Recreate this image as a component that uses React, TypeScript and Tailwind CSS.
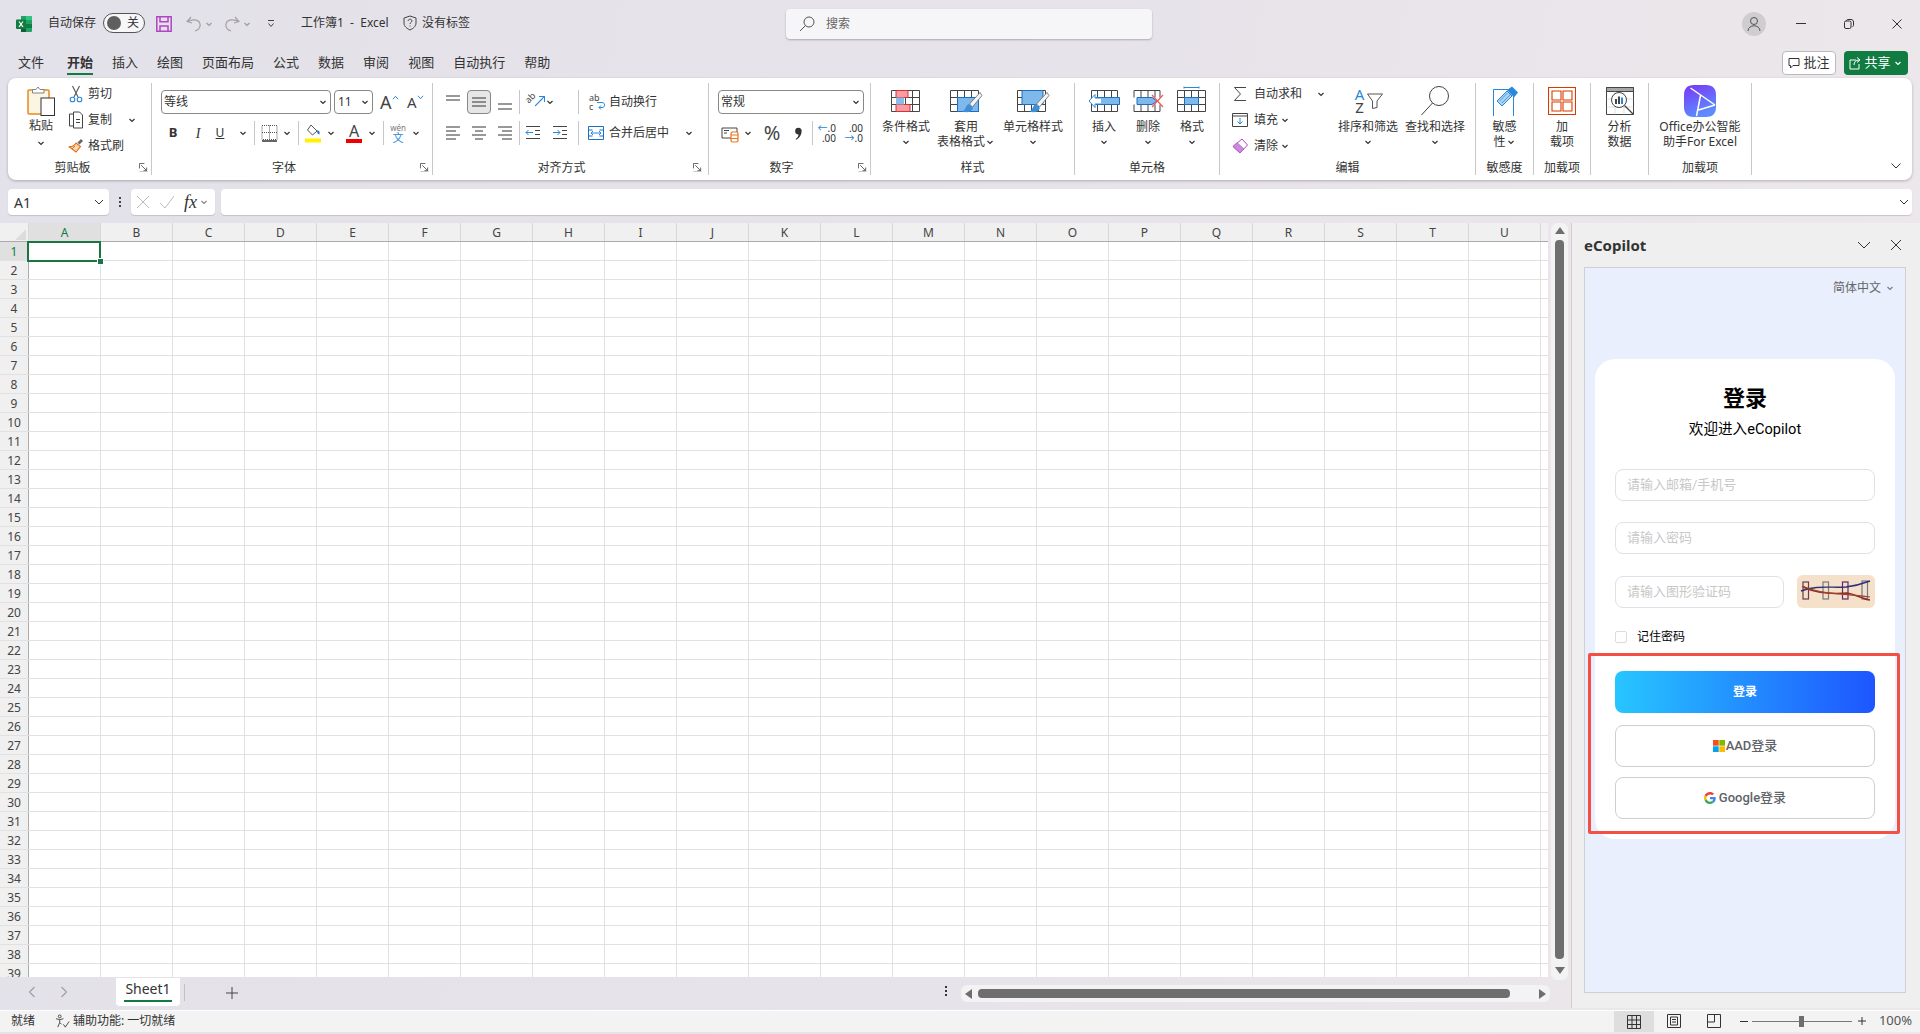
import React from 'react';

const green = '#107c41';
const columns = 'ABCDEFGHIJKLMNOPQRSTU'.split('');
const rows = Array.from({ length: 39 }, (_, i) => i + 1);

function Chev({ className = '' }: { className?: string }) {
  return (
    <svg viewBox="0 0 10 10" className={`w-[10px] h-[10px] shrink-0 ${className}`} fill="none" stroke="#333" strokeWidth="1.2">
      <path d="M2.500 4l2.500 2.500L7.500 4" />
    </svg>
  );
}

function Sep({ className = '' }: { className?: string }) {
  return <div className={`w-px h-[24px] bg-[#c8c6c8] shrink-0 ${className}`} />;
}

function Launcher() {
  return (
    <svg viewBox="0 0 10 10" className="w-[9px] h-[9px]" fill="none" stroke="#555" strokeWidth="1">
      <path d="M.5 6V.5H6M2.500 2.500L8.500 8.500M5 8.500h3.500V5" />
      <path d="M.5 9.500h9" stroke="#bbb" />
    </svg>
  );
}

function Group({ className, label, launcher, children }: { className: string; label?: string; launcher?: string; children: React.ReactNode }) {
  return (
    <div className={`shrink-0 h-full border-r border-[#c9c7ca] flex flex-col ${className}`}>
      <div className="h-[78px] flex">{children}</div>
      <div className="h-[13px] flex items-center text-[12px] leading-[13px] text-[#333]">
        <div className="flex-1 text-center whitespace-nowrap">{label}</div>
        {launcher && <div className={`flex justify-center ${launcher}`}><Launcher /></div>}
      </div>
    </div>
  );
}

function BigBtn({ className, icon, line1, line2, chev }: { className: string; icon: React.ReactNode; line1: string; line2?: string; chev?: boolean }) {
  return (
    <div className={`shrink-0 flex flex-col items-center ${className}`}>
      <div className="mt-[2px] h-[32px] flex items-center justify-center">{icon}</div>
      <div className="mt-[2px] h-[15px] leading-[15px] text-[12px] whitespace-nowrap text-[#333]">{line1}</div>
      <div className="h-[15px] leading-[15px] text-[12px] whitespace-nowrap text-[#333] flex items-center justify-center">
        {line2}
        {chev && <Chev />}
      </div>
    </div>
  );
}

function LinesIcon({ lines, className = '' }: { lines: [number, number, number][]; className?: string }) {
  return (
    <svg viewBox="0 0 20 20" className={`w-[20px] h-[20px] shrink-0 ${className}`} stroke="#333" strokeWidth="1">
      {lines.map(([y, a, b], i) => (
        <path key={i} d={`M${a} ${y}H${b}`} />
      ))}
    </svg>
  );
}

// 28x22 table drawn at 1,4 in a 32x30 box, 4 cols 3 rows
const tableLines = <path d="M1.500 4.500h28v21h-28zM1.500 11.500h28M1.500 18.500h28M8.500 4.500v21M15.500 4.500v21M22.500 4.500v21" stroke="#444" fill="#fff" />;

function Brush() {
  return (
    <g>
      <path d="M31 6.500L20.500 18l3 3L33 9.500z" fill="#f4f4f4" stroke="#666" strokeWidth=".8" />
      <path d="M20 18c-3.500 1-2.500 5-6.500 7.500 4.500 1.500 9.500.5 10.500-3.500z" fill="#3f8fd8" />
    </g>
  );
}

function TitleBar() {
  return (
    <div className="h-[46px] shrink-0 flex items-start text-[12px] text-[#333]">
      <svg viewBox="0 0 16 16" className="w-[16px] h-[16px] ml-[16px] mt-[16px] shrink-0">
        <path d="M5 0h10a1 1 0 011 1v14a1 1 0 01-1 1H5z" fill="#21a366" />
        <path d="M10 0h5a1 1 0 011 1v3h-6z" fill="#33c481" />
        <path d="M5 8h5v8H5z" fill="#185c37" />
        <path d="M10 8h6v4h-6z" fill="#107c41" />
        <rect x="0" y="3.500" width="10" height="9.500" rx="1" fill="#107c41" />
        <path d="M2.500 5.500l1.700 2.800-1.800 2.800h1.400L5 9.200l1.200 1.900h1.400L5.800 8.300l1.700-2.800H6.200L5 7.400 3.800 5.500z" fill="#fff" />
      </svg>
      <div className="ml-[16px] mt-[15px] leading-[16px] w-[55px]">自动保存</div>
      <div className="mt-[13px] w-[42px] h-[20px] rounded-full border border-[#555] bg-[#f7f6f8] flex items-center pl-[3px] gap-[6px]">
        <div className="w-[14px] h-[14px] rounded-full bg-[#5f5f5f]" />
        <span className="leading-none">关</span>
      </div>
      <svg viewBox="0 0 16 16" className="w-[16px] h-[16px] ml-[11px] mt-[16px] shrink-0" fill="none" stroke="#b146c2" strokeWidth="1.500">
        <path d="M.8.800h14.400v14.400H.8zM4 .8v5h8v-5M4 15.200V10h8v5.200" />
      </svg>
      <svg viewBox="0 0 16 16" className="w-[16px] h-[16px] ml-[14px] mt-[16px] shrink-0" fill="none" stroke="#a3a1a6" strokeWidth="1.200">
        <path d="M5 1L1 5.500l5 1.500M1.500 5.500C6 3 13 3 14 8c.6 3.500-2 6-5 7" />
      </svg>
      <Chev className="ml-[2px] mt-[19px] opacity-40" />
      <svg viewBox="0 0 16 16" className="w-[16px] h-[16px] ml-[10px] mt-[16px] shrink-0" fill="none" stroke="#a3a1a6" strokeWidth="1.200">
        <path d="M11 1l4 4.500-5 1.500M14.500 5.500C10 3 3 3 2 8c-.6 3.500 2 6 5 7" />
      </svg>
      <Chev className="ml-[2px] mt-[19px] opacity-40" />
      <svg viewBox="0 0 10 10" className="w-[10px] h-[10px] ml-[14px] mt-[19px] shrink-0" fill="none" stroke="#444" strokeWidth="1">
        <path d="M2 1.500h6M2.500 4.500L5 7.500l2.500-3" />
      </svg>
      <div className="ml-[25px] mt-[15px] leading-[16px] whitespace-nowrap w-[95px]">工作簿1&nbsp;&nbsp;-&nbsp;&nbsp;Excel</div>
      <svg viewBox="0 0 14 16" className="w-[14px] h-[16px] ml-[7px] mt-[15px] shrink-0" fill="none" stroke="#444" strokeWidth="1">
        <path d="M7 1l6 2v5c0 3.500-3 5.500-6 7-3-1.500-6-3.500-6-7V3z" />
        <path d="M5.200 6c0-2.400 3.700-2.400 3.700 0 0 1.400-1.900 1.400-1.900 3M7 10.500v1" />
      </svg>
      <div className="ml-[5px] mt-[15px] leading-[16px] whitespace-nowrap">没有标签</div>

      <div className="ml-[316px] mt-[9px] w-[366px] h-[30px] bg-[#f6f5f7] rounded-[4px] shadow-[0_1px_2px_rgba(0,0,0,0.25)] flex items-center pl-[13px] text-[#666]">
        <svg viewBox="0 0 16 16" className="w-[16px] h-[16px]" fill="none" stroke="#555" strokeWidth="1">
          <circle cx="10" cy="6" r="5" />
          <path d="M6.500 9.500L1 15" />
        </svg>
        <span className="ml-[11px]">搜索</span>
      </div>

      <div className="ml-[590px] mt-[12px] w-[24px] h-[24px] rounded-full bg-[#cfcdcf] flex items-center justify-center">
        <svg viewBox="0 0 16 16" className="w-[16px] h-[16px]" fill="none" stroke="#555" strokeWidth="1">
          <circle cx="8" cy="5" r="3.500" />
          <path d="M2 15c0-7 12-7 12 0" />
        </svg>
      </div>
      <div className="ml-[30px] mt-[23px] w-[10px] h-px bg-[#333]" />
      <svg viewBox="0 0 10 10" className="w-[10px] h-[10px] ml-[38px] mt-[19px]" fill="none" stroke="#333" strokeWidth="1">
        <rect x=".5" y="2" width="6.500" height="7.500" rx="1.500" />
        <path d="M2.500 2c0-1 .5-1.500 1.500-1.500h3c1.500 0 2.500 1 2.500 2.500v3.500c0 .7-.3 1-1 1" />
      </svg>
      <svg viewBox="0 0 10 10" className="w-[10px] h-[10px] ml-[38px] mt-[19px]" fill="none" stroke="#333" strokeWidth="1">
        <path d="M.5.500l9 9M9.500.5l-9 9" />
      </svg>
    </div>
  );
}

function TabsRow() {
  const tabs = ['插入', '绘图', '页面布局', '公式', '数据', '审阅', '视图', '自动执行', '帮助'];
  return (
    <div className="h-[32px] shrink-0 flex text-[13px] text-[#333]">
      <div className="ml-[18px] mt-[7px] leading-[18px]">文件</div>
      <div className="ml-[23px] mt-[7px] h-[25px] flex flex-col items-start font-bold">
        <span className="leading-[18px]">开始</span>
        <div className="w-[26px] h-[2px] mt-[2px]" style={{ backgroundColor: green }} />
      </div>
      {tabs.map((t) => (
        <div key={t} className="ml-[19px] mt-[7px] leading-[18px] whitespace-nowrap">
          {t}
        </div>
      ))}
      <div className="ml-auto mt-[5px] w-[54px] h-[24px] bg-white border border-[#bbb] rounded-[4px] flex items-center justify-center gap-[3px]">
        <svg viewBox="0 0 12 12" className="w-[12px] h-[12px]" fill="none" stroke="#333" strokeWidth="1">
          <path d="M1 1.500h10v7H5L2.500 11V8.500H1z" />
        </svg>
        <span>批注</span>
      </div>
      <div className="ml-[8px] mr-[12px] mt-[5px] w-[64px] h-[24px] bg-[#107c41] rounded-[4px] flex items-center justify-center text-white">
        <svg viewBox="0 0 12 14" className="w-[12px] h-[14px] mr-[3px]" fill="none" stroke="#fff" strokeWidth="1">
          <path d="M7 4H1v9h9V8M5 9c0-3 2-5 5-5M8 1.500L11 4 8 6.500" />
        </svg>
        <span>共享</span>
        <svg viewBox="0 0 10 10" className="w-[10px] h-[10px] ml-[2px]" fill="none" stroke="#fff" strokeWidth="1.100">
          <path d="M2.500 4L5 6.500 7.500 4" />
        </svg>
      </div>
    </div>
  );
}

function Ribbon() {
  return (
    <div className="h-[102px] shrink-0 mx-[8px] bg-white rounded-[8px] shadow-[0_1px_3px_rgba(0,0,0,0.25)] py-[5px] flex items-stretch text-[12px] text-[#333] relative">
      {/* 剪贴板 */}
      <Group className="w-[144px]" label="剪贴板" launcher="w-[14px] pr-[2px]">
        <div className="ml-[6px] w-[54px] flex flex-col items-center">
          <svg viewBox="0 0 28 30" className="w-[28px] h-[30px] mt-[3px]" fill="none">
            <rect x="1" y="4" width="21" height="24" rx="1" fill="#fdf5e4" stroke="#e8891d" strokeWidth="1.500" />
            <path d="M5.500 7V3.500h3.500L11 1l2 2.500h4V7z" fill="#fff" stroke="#777" strokeWidth=".9" />
            <rect x="14" y="12" width="13.500" height="17.500" fill="#fff" stroke="#333" />
          </svg>
          <div className="mt-[2px] h-[16px] leading-[16px]">粘贴</div>
          <Chev className="mt-[4px]" />
        </div>
        <div className="flex flex-col gap-[4px]">
          <div className="h-[22px] flex items-center">
            <svg viewBox="0 0 16 18" className="w-[16px] h-[18px]" fill="none" strokeWidth="1.100">
              <path d="M4.500 1l5.500 11M11.500 1L6 12" stroke="#555" />
              <circle cx="4.500" cy="14.500" r="2.300" stroke="#2b88d8" />
              <circle cx="11.500" cy="14.500" r="2.300" stroke="#2b88d8" />
            </svg>
            <span className="ml-[4px]">剪切</span>
          </div>
          <div className="h-[22px] flex items-center">
            <svg viewBox="0 0 16 18" className="w-[16px] h-[18px]" fill="none" stroke="#444" strokeWidth="1">
              <path d="M5.500 3H1.500v12h4" />
              <path d="M5.500 1h6l3 3v13h-9zM8 8.500h4M8 11.500h4" />
            </svg>
            <span className="ml-[4px]">复制</span>
            <Chev className="ml-[15px]" />
          </div>
          <div className="h-[22px] flex items-center">
            <svg viewBox="0 0 16 18" className="w-[16px] h-[18px]" fill="none">
              <path d="M9.500 5.500L13 2l2 2-3.500 3.500z" fill="#666" />
              <path d="M8 6l4.500 3.500L8 15 .8 9.500C3 10 6 9 8 6z" fill="#fbd7ac" stroke="#e2711d" strokeWidth="1.100" />
              <path d="M4 12l3-3" stroke="#e2711d" />
            </svg>
            <span className="ml-[4px]">格式刷</span>
          </div>
        </div>
      </Group>

      {/* 字体 */}
      <Group className="w-[281px]" label="字体" launcher="w-[16px]">
        <div className="pl-[9px] flex flex-col">
          <div className="mt-[7px] h-[24px] flex items-center">
            <div className="w-[170px] h-[24px] border border-[#8a8886] rounded-[4px] flex items-center justify-between pl-[2px] pr-[2px]">
              等线
              <Chev />
            </div>
            <div className="ml-[3px] w-[39px] h-[24px] border border-[#8a8886] rounded-[4px] flex items-center justify-between pl-[3px] pr-[2px]">
              11
              <Chev />
            </div>
            <div className="ml-[7px] w-[20px] flex items-start text-[18px] leading-[20px] text-[#444]">
              A
              <svg viewBox="0 0 8 6" className="w-[7px] h-[5px] mt-[3px]" fill="none" stroke="#2b88d8" strokeWidth="1.200">
                <path d="M1 5l3-3.500L7 5" />
              </svg>
            </div>
            <div className="ml-[7px] w-[20px] flex items-start text-[15px] leading-[20px] text-[#444]">
              A
              <svg viewBox="0 0 8 6" className="w-[7px] h-[5px] mt-[3px]" fill="none" stroke="#2b88d8" strokeWidth="1.200">
                <path d="M1 1l3 3.500L7 1" />
              </svg>
            </div>
          </div>
          <div className="mt-[7px] h-[24px] flex items-center">
            <span className="ml-[2px] w-[20px] text-center font-bold text-[13px]">B</span>
            <span className="ml-[5px] w-[20px] text-center italic font-['Liberation_Serif',serif] text-[14px]">I</span>
            <span className="ml-[2px] w-[20px] text-center underline">U</span>
            <Chev className="ml-[8px]" />
            <Sep className="ml-[6px]" />
            <svg viewBox="0 0 20 20" className="ml-[4px] w-[20px] h-[20px]" fill="none" stroke="#555" strokeWidth="1" strokeDasharray="1 1">
              <path d="M3 2.500h15v14H3zM3 9.500h15M10.500 2.500v14" />
              <path d="M3 18h15" stroke="#111" strokeWidth="1.300" strokeDasharray="none" />
            </svg>
            <Chev className="ml-[3px]" />
            <Sep className="ml-[6px]" />
            <svg viewBox="0 0 20 20" className="ml-[4px] w-[20px] h-[20px]" fill="none">
              <path d="M8 2l6 6-4.500 4L4.500 7z" fill="#fff" stroke="#555" />
              <path d="M14 7l2.500 1.500v3l-2-1z" fill="#1b6ec2" />
              <rect x="2" y="15.500" width="16" height="4" fill="#fff200" />
            </svg>
            <Chev className="ml-[3px]" />
            <div className="ml-[8px] w-[20px] flex flex-col items-center">
              <span className="text-[16px] leading-[15px] text-[#444]">A</span>
              <div className="w-[16px] h-[4px] bg-[#f00000]" />
            </div>
            <Chev className="ml-[3px]" />
            <Sep className="ml-[6px]" />
            <div className="ml-[4px] w-[20px] flex flex-col items-center leading-[10px]">
              <span className="text-[8px] text-[#777]">wén</span>
              <span className="text-[11px] text-[#2b88d8]">文</span>
            </div>
            <Chev className="ml-[3px]" />
          </div>
        </div>
      </Group>

      {/* 对齐方式 */}
      <Group className="w-[276px]" label="对齐方式" launcher="w-[18px] pr-[4px]">
        <div className="flex flex-col">
          <div className="mt-[7px] h-[24px] flex items-center">
            <LinesIcon className="ml-[10px]" lines={[[4, 3, 17], [8, 3, 17]]} />
            <div className="ml-[4px] w-[24px] h-[24px] rounded-[4px] bg-[#e6e6e6] border border-[#8a8886] flex items-center justify-center">
              <LinesIcon lines={[[6, 3, 17], [10, 3, 17], [14, 3, 17]]} />
            </div>
            <LinesIcon className="ml-[4px]" lines={[[12, 3, 17], [17, 3, 17]]} />
            <Sep className="ml-[4px]" />
            <div className="ml-[5px] w-[20px] h-[20px] flex items-start">
              <span className="-rotate-45 text-[9px] leading-[10px] text-[#444] mt-[1px]">ab</span>
              <svg viewBox="0 0 10 12" className="w-[10px] h-[12px] mt-[3px] -ml-[1px]" fill="none" stroke="#2b88d8" strokeWidth="1.100">
                <path d="M0 11L9 2M4 1.500h5.500V7" />
              </svg>
            </div>
            <Chev />
            <Sep className="ml-[23px]" />
            <div className="ml-[10px] w-[18px] h-[20px] flex">
              <span className="text-[9px] leading-[9px] text-[#444] w-[10px] mt-[1px]">
                ab
                <br />c
              </span>
              <svg viewBox="0 0 10 10" className="w-[10px] h-[10px] mt-[9px] -ml-[3px]" fill="none" stroke="#2b88d8">
                <path d="M1 1.500h5c3.500 0 3.500 5 0 5H3M5 4.500L3 6.500l2 2" />
              </svg>
            </div>
            <span className="ml-[2px] whitespace-nowrap">自动换行</span>
          </div>
          <div className="mt-[7px] h-[24px] flex items-center">
            <LinesIcon className="ml-[10px]" lines={[[4, 3, 17], [8, 3, 13], [12, 3, 17], [16, 3, 13]]} />
            <LinesIcon className="ml-[6px]" lines={[[4, 3, 17], [8, 6, 14], [12, 3, 17], [16, 6, 14]]} />
            <LinesIcon className="ml-[6px]" lines={[[4, 3, 17], [8, 7, 17], [12, 3, 17], [16, 7, 17]]} />
            <Sep className="ml-[4px]" />
            <svg viewBox="0 0 20 20" className="ml-[3px] w-[20px] h-[20px]" fill="none" stroke="#444">
              <path d="M3 3.500h14M12 7.500h5M12 11.500h5M3 15.500h14" />
              <path d="M10 9.500H3M5.500 7L3 9.500 5.500 12" stroke="#2b88d8" />
            </svg>
            <svg viewBox="0 0 20 20" className="ml-[7px] w-[20px] h-[20px]" fill="none" stroke="#444">
              <path d="M3 3.500h14M12 7.500h5M12 11.500h5M3 15.500h14" />
              <path d="M3 9.500h7M7.500 7l2.500 2.500L7.500 12" stroke="#2b88d8" />
            </svg>
            <Sep className="ml-[8px]" />
            <svg viewBox="0 0 18 18" className="ml-[8px] w-[18px] h-[18px]" fill="none" stroke="#333">
              <path d="M1.500 2.500h15v13h-15zM1.500 6h4M12.500 6h4M1.500 12h4M12.500 12h4" stroke="#1b6ec2" />
              <path d="M4 9h10M6 7L4 9l2 2M12 7l2 2-2 2" stroke="#2b88d8" />
            </svg>
            <span className="ml-[4px] whitespace-nowrap">合并后居中</span>
            <Chev className="ml-[15px]" />
          </div>
        </div>
      </Group>

      {/* 数字 */}
      <Group className="w-[162px]" label="数字" launcher="w-[16px]">
        <div className="pl-[9px] flex flex-col">
          <div className="mt-[7px] w-[146px] h-[24px] border border-[#8a8886] rounded-[4px] flex items-center justify-between px-[2px]">
            常规
            <Chev />
          </div>
          <div className="mt-[7px] h-[24px] flex items-center">
            <svg viewBox="0 0 20 20" className="ml-[2px] w-[20px] h-[20px]" fill="none" stroke="#444">
              <path d="M2 5h15v10H2zM4 7.500h5M4 10h3" />
              <rect x="11" y="9" width="7" height="10" rx="1.500" fill="#fff" stroke="#e8761d" strokeWidth="1.200" />
              <path d="M11 12h7M11 15.500h7" stroke="#e8761d" />
            </svg>
            <Chev className="ml-[3px]" />
            <span className="ml-[8px] w-[22px] text-center text-[20px] leading-none text-[#444]">%</span>
            <svg viewBox="0 0 10 16" className="ml-[11px] w-[9px] h-[15px]" fill="#333">
              <path d="M5 1.500a3.500 3.500 0 013.500 4C8.500 9.500 6 13 2.500 15l-.7-.8C4 12.500 5 11 5 9a3.500 3.500 0 110-7.500z" />
            </svg>
            <Sep className="ml-[9px]" />
            <div className="ml-[3px] w-[20px] text-[10px] leading-[10px] flex flex-col items-end">
              <span><span className="text-[#2b88d8]">←</span>.0</span>
              <span>.00</span>
            </div>
            <div className="ml-[7px] w-[20px] text-[10px] leading-[10px] flex flex-col items-end">
              <span>.00</span>
              <span><span className="text-[#2b88d8]">→</span>.0</span>
            </div>
          </div>
        </div>
      </Group>

      {/* 样式 */}
      <Group className="w-[204px]" label="样式">
        <BigBtn
          className="w-[70px]"
          line1="条件格式"
          chev
          icon={
            <svg viewBox="0 0 32 30" className="w-[32px] h-[30px]" fill="none">
              {tableLines}
              <path d="M6 4.500h12v7H6zM6 18.500h14v7H6z" fill="#fb9aa0" stroke="#d13438" />
              <path d="M6 11.500h8v7H6z" fill="#8abcea" />
            </svg>
          }
        />
        <BigBtn
          className="w-[50px]"
          line1="套用"
          line2="表格格式"
          chev
          icon={
            <svg viewBox="0 0 34 30" className="w-[34px] h-[30px]" fill="none">
              {tableLines}
              <path d="M8.500 11.500h21v14h-21z" fill="#7fb8ea" stroke="#1b6ec2" />
              <Brush />
            </svg>
          }
        />
        <BigBtn
          className="w-[84px]"
          line1="单元格样式"
          chev
          icon={
            <svg viewBox="0 0 34 30" className="w-[34px] h-[30px]" fill="none">
              {tableLines}
              <path d="M6 4.500h21v14H6z" fill="#7fb8ea" stroke="#1b6ec2" />
              <Brush />
            </svg>
          }
        />
      </Group>

      {/* 单元格 */}
      <Group className="w-[145px]" label="单元格">
        <div className="w-[7px]" />
        <BigBtn
          className="w-[44px]"
          line1="插入"
          chev
          icon={
            <svg viewBox="0 0 32 30" className="w-[32px] h-[30px]" fill="none">
              <path d="M3.500 4.500h26v21h-26zM9.500 4.500v21M16.500 4.500v21M23.500 4.500v21" stroke="#444" fill="#fff" />
              <path d="M8 11.500h23.500v7H8z" fill="#7fb8ea" stroke="#1b6ec2" />
              <path d="M13 12H7V8.500L1 15l6 6.500V18h6" stroke="#2b88d8" fill="#fff" />
            </svg>
          }
        />
        <BigBtn
          className="w-[44px]"
          line1="删除"
          chev
          icon={
            <svg viewBox="0 0 32 30" className="w-[32px] h-[30px]" fill="none">
              <path d="M2 4.500h26M2 25.500h26M2 4.500v7M2 18.500v7M9 4.500v21M16 4.500v21M23 4.500v7M23 18.500v7M28 4.500v7M28 18.500v7" stroke="#444" />
              <path d="M5 11.500h15l5 3.500-5 3.500H5z" fill="#7fb8ea" stroke="#1b6ec2" />
              <path d="M20 9l11 12M31 9L20 21" stroke="#f25a5a" strokeWidth="1.200" />
            </svg>
          }
        />
        <BigBtn
          className="w-[44px]"
          line1="格式"
          chev
          icon={
            <svg viewBox="0 0 32 30" className="w-[32px] h-[30px]" fill="none">
              {tableLines}
              <path d="M8.500 11.500h14v7h-14z" fill="#7fb8ea" stroke="#1b6ec2" />
              <path d="M8 1.500h15M8 .5v2M23 .5v2" stroke="#2b88d8" />
            </svg>
          }
        />
      </Group>

      {/* 编辑 */}
      <Group className="w-[256px]" label="编辑">
        <div className="ml-[12px] w-[94px] flex flex-col gap-[4px]">
          <div className="h-[22px] flex items-center">
            <svg viewBox="0 0 16 16" className="w-[16px] h-[16px]" fill="none" stroke="#444" strokeWidth="1">
              <path d="M14 1.500H2.500l6 6.500-6 6.500H14" />
            </svg>
            <span className="ml-[6px] whitespace-nowrap">自动求和</span>
            <Chev className="ml-[14px]" />
          </div>
          <div className="h-[22px] flex items-center">
            <svg viewBox="0 0 16 16" className="w-[16px] h-[16px]" fill="none" stroke="#444">
              <path d="M.5 1.500h15v13H.5zM.5 4h15" />
              <path d="M8 6v6M5.500 9.500L8 12l2.500-2.500" stroke="#2b88d8" />
            </svg>
            <span className="ml-[6px]">填充</span>
            <Chev className="ml-[2px]" />
          </div>
          <div className="h-[22px] flex items-center">
            <svg viewBox="0 0 16 16" className="w-[16px] h-[16px]" fill="none">
              <path d="M10 1l5.500 6L8 15 1 8.500z" fill="#fff" stroke="#b146c2" />
              <path d="M1 8.500l4-4 7 6.500-4 4z" fill="#c88bd8" stroke="#b146c2" strokeWidth=".6" />
            </svg>
            <span className="ml-[6px]">清除</span>
            <Chev className="ml-[2px]" />
          </div>
        </div>
        <BigBtn
          className="w-[84px]"
          line1="排序和筛选"
          chev
          icon={
            <div className="flex items-center">
              <div className="flex flex-col items-center w-[12px] text-[15px] leading-[13px]">
                <span className="text-[#2b88d8]">A</span>
                <span className="text-[#444]">Z</span>
              </div>
              <svg viewBox="0 0 16 16" className="ml-[1px] w-[16px] h-[16px]" fill="none" stroke="#555">
                <path d="M.5 1h15l-5.500 7v6.500l-4.500 1V8z" />
              </svg>
            </div>
          }
        />
        <BigBtn
          className="w-[50px]"
          line1="查找和选择"
          chev
          icon={
            <svg viewBox="0 0 32 32" className="w-[32px] h-[32px]" fill="none" stroke="#444">
              <circle cx="20" cy="11" r="9.500" />
              <path d="M13.500 18L2.500 30" />
            </svg>
          }
        />
      </Group>

      {/* 敏感度 / 加载项 */}
      <Group className="w-[58px]" label="敏感度">
        <BigBtn
          className="w-full"
          line1="敏感"
          line2="性"
          chev
          icon={
            <svg viewBox="0 0 28 30" className="w-[28px] h-[30px]" fill="none">
              <path d="M2.500 3.500h20v27h-20z" stroke="#2b88d8" fill="#fff" />
              <path d="M6 15l10-10 5 5-10 10z" fill="#a9d3f3" stroke="#2b88d8" />
              <path d="M8.500 15l8-8M11 17l8-8" stroke="#2b88d8" strokeWidth=".7" />
              <path d="M16 4l5-3.500 6 6-4 5z" fill="#2b88d8" />
            </svg>
          }
        />
      </Group>
      <Group className="w-[57px]" label="加载项">
        <BigBtn
          className="w-full"
          line1="加"
          line2="载项"
          icon={
            <svg viewBox="0 0 28 28" className="w-[28px] h-[28px]" fill="none" stroke="#d83b01" strokeWidth="1.100">
              <path d="M.5.500h27v27H.5z" />
              <path d="M4 4h9v9H4zM15 4h9v9h-9zM4 15h9v9H4zM15 15h9v9h-9z" />
            </svg>
          }
        />
      </Group>
      <Group className="w-[58px]">
        <BigBtn
          className="w-full"
          line1="分析"
          line2="数据"
          icon={
            <svg viewBox="0 0 28 28" className="w-[28px] h-[28px]" fill="none" stroke="#444">
              <path d="M.5.500h27v27H.5z" />
              <path d="M.5.500h27v4H.5z" fill="#a8a6a6" />
              <path d="M.5 12h27M.5 20h27M9 4.500v23M18 4.500v23" stroke="#ccc" strokeWidth=".6" />
              <circle cx="13" cy="13" r="7.500" fill="#fff" />
              <path d="M18.500 18.500L27 27" strokeWidth="1.300" />
              <path d="M10 12v5M13 9.500V17" stroke="#444" strokeWidth="2" />
              <path d="M16 10.500V17" stroke="#2b88d8" strokeWidth="2" />
            </svg>
          }
        />
      </Group>
      <Group className="w-[103px]" label="加载项">
        <BigBtn
          className="w-full"
          line1="Office办公智能"
          line2="助手For Excel"
          icon={
            <svg viewBox="0 0 32 32" className="w-[32px] h-[32px]">
              <defs>
                <linearGradient id="ofc" x1="0" y1="0" x2=".4" y2="1">
                  <stop offset="0" stopColor="#7a35f5" />
                  <stop offset="1" stopColor="#5b8dff" />
                </linearGradient>
              </defs>
              <path d="M10 0h12c7 0 10 4 10 10v12c0 7-4 10-10 10H9C3 32 0 28 0 22V10C0 4 3 0 10 0z" fill="url(#ofc)" />
              <path d="M6.500 3L31 20M12.500 31L16.500 10.500M14.500 25L31 20" fill="none" stroke="#fff" strokeWidth="1.500" />
            </svg>
          }
        />
      </Group>
      <svg viewBox="0 0 12 12" className="absolute right-[10px] bottom-[8px] w-[12px] h-[12px]" fill="none" stroke="#333" strokeWidth="1">
        <path d="M1.500 3.500L6 8l4.500-4.500" />
      </svg>
    </div>
  );
}

function FormulaBar() {
  return (
    <div className="h-[26px] shrink-0 mt-[9px] mx-[8px] flex text-[#333]">
      <div className="w-[101px] bg-white rounded-[4px] shadow-[0_1px_1px_rgba(0,0,0,0.15)] flex items-center justify-between pl-[6px] pr-[5px] text-[14px]">
        A1
        <svg viewBox="0 0 10 10" className="w-[10px] h-[10px]" fill="none" stroke="#333">
          <path d="M1 3l4 4 4-4" />
        </svg>
      </div>
      <div className="w-[22px] flex flex-col items-center justify-center gap-[2px]">
        <div className="w-[2px] h-[2px] bg-[#444]" />
        <div className="w-[2px] h-[2px] bg-[#444]" />
        <div className="w-[2px] h-[2px] bg-[#444]" />
      </div>
      <div className="w-[84px] bg-white rounded-[4px] shadow-[0_1px_1px_rgba(0,0,0,0.15)] flex items-center pl-[5px]">
        <svg viewBox="0 0 14 14" className="w-[14px] h-[14px]" fill="none" stroke="#bdbbbd" strokeWidth="1">
          <path d="M1 1l12 12M13 1L1 13" />
        </svg>
        <svg viewBox="0 0 16 14" className="ml-[9px] w-[16px] h-[14px]" fill="none" stroke="#bdbbbd" strokeWidth="1">
          <path d="M1 8l5 5L15 1" />
        </svg>
        <span className="ml-[9px] w-[15px] font-['Liberation_Serif',serif] italic text-[18px] leading-none">fx</span>
        <Chev className="opacity-60" />
      </div>
      <div className="ml-[6px] flex-1 bg-white rounded-[4px] shadow-[0_1px_1px_rgba(0,0,0,0.15)] flex items-center justify-end pr-[3px]">
        <svg viewBox="0 0 10 10" className="w-[10px] h-[10px]" fill="none" stroke="#333">
          <path d="M1 3l4 4 4-4" />
        </svg>
      </div>
    </div>
  );
}

function Sheet() {
  return (
    <div className="flex-1 min-h-0 bg-white overflow-hidden relative text-[12px] text-[#444]">
      <div className="h-[19px] flex bg-[#f0f0f0] border-b border-[#ababab]">
        <div className="w-[29px] shrink-0 border-r border-[#d8d8d8] flex items-end justify-end pr-[2px] pb-[1px]">
          <div className="w-0 h-0 border-l-[11px] border-l-transparent border-b-[11px] border-b-[#dcdcdc]" />
        </div>
        {columns.map((c) => (
          <div
            key={c}
            className={`w-[72px] shrink-0 border-r border-[#d8d8d8] text-center leading-[20px] ${c === 'A' ? 'bg-[#e0e0e0] text-[#107c41]' : ''}`}
          >
            {c}
          </div>
        ))}
        <div className="flex-1" />
      </div>
      {rows.map((r) => (
        <div key={r} className="h-[19px] flex border-b border-[#e1e1e1]">
          <div
            className={`w-[29px] shrink-0 border-r border-[#ababab] text-center leading-[20px] ${r === 1 ? 'bg-[#e0e0e0] text-[#107c41]' : 'bg-[#f0f0f0]'}`}
          >
            {r}
          </div>
          {columns.map((c) => (
            <div key={c} className="w-[72px] shrink-0 border-r border-[#e1e1e1]" />
          ))}
          <div className="flex-1" />
        </div>
      ))}
      {/* selection */}
      <div className="absolute left-[27px] top-[18px] w-[74px] h-[21px] border-2 border-[#1a7443]" />
      <div className="absolute left-[98px] top-[36px] w-[5px] h-[5px] bg-[#1a7443] outline outline-white" />
    </div>
  );
}

function VScroll() {
  return (
    <div className="w-[17px] mx-[3px] h-[757px] bg-[#f3f3f3] rounded-[6px] flex flex-col items-center">
      <div className="mt-[4px] w-0 h-0 border-x-[5px] border-x-transparent border-b-[7px] border-b-[#6e6e6e]" />
      <div className="mt-[6px] w-[9px] h-[719px] bg-[#6e6e6e] rounded-[4px]" />
      <div className="mt-[8px] w-0 h-0 border-x-[5px] border-x-transparent border-t-[7px] border-t-[#6e6e6e]" />
    </div>
  );
}

function SheetTabs() {
  return (
    <div className="h-[33px] shrink-0 flex items-start text-[#333]">
      <svg viewBox="0 0 10 12" className="ml-[27px] mt-[9px] w-[10px] h-[12px]" fill="none" stroke="#a0a0a0" strokeWidth="1.200">
        <path d="M7.500 1L2.500 6l5 5" />
      </svg>
      <svg viewBox="0 0 10 12" className="ml-[22px] mt-[9px] w-[10px] h-[12px]" fill="none" stroke="#a0a0a0" strokeWidth="1.200">
        <path d="M2.500 1l5 5-5 5" />
      </svg>
      <div className="ml-[47px] w-[64px] h-[28px] bg-white rounded-b-[4px] mt-[1px] flex flex-col items-center text-[14px] leading-[22px]">
        Sheet1
        <div className="w-[48px] h-[2px] bg-[#107c41]" />
      </div>
      <div className="ml-[4px] mt-[7px] w-px h-[17px] bg-[#c0c0c0]" />
      <svg viewBox="0 0 12 12" className="ml-[41px] mt-[10px] w-[12px] h-[12px]" fill="none" stroke="#444">
        <path d="M6 0v12M0 6h12" />
      </svg>
      <div className="ml-[707px] mt-[9px] flex flex-col gap-[2px]">
        <div className="w-[2px] h-[2px] bg-[#333]" />
        <div className="w-[2px] h-[2px] bg-[#333]" />
        <div className="w-[2px] h-[2px] bg-[#333]" />
      </div>
      <div className="ml-[14px] mt-[8px] w-[589px] h-[17px] bg-[#f3f3f3] rounded-[6px] flex items-center px-[4px]">
        <div className="w-0 h-0 border-y-[5px] border-y-transparent border-r-[7px] border-r-[#6e6e6e]" />
        <div className="ml-[6px] w-[532px] h-[9px] bg-[#6e6e6e] rounded-[4px]" />
        <div className="ml-auto w-0 h-0 border-y-[5px] border-y-transparent border-l-[7px] border-l-[#6e6e6e]" />
      </div>
    </div>
  );
}

function InputBox({ placeholder, className = '' }: { placeholder: string; className?: string }) {
  return (
    <div className={`h-[32px] border border-[#e0e0e8] rounded-[8px] flex items-center pl-[11px] text-[13px] text-[#c8c8c8] ${className}`}>
      {placeholder}
    </div>
  );
}

function LoginPanel() {
  return (
    <div className="w-[349px] h-[785px] shrink-0 bg-[#efefef] border-l border-[#d0d0d0] flex flex-col">
      <div className="h-[44px] shrink-0 flex items-center pl-[12px] pr-[18px] text-[#333]">
        <span className="text-[15px] font-bold">eCopilot</span>
        <svg viewBox="0 0 14 14" className="ml-auto w-[14px] h-[14px]" fill="none" stroke="#333">
          <path d="M1 4l6 6 6-6" />
        </svg>
        <svg viewBox="0 0 12 12" className="ml-[19px] w-[12px] h-[12px]" fill="none" stroke="#333">
          <path d="M1 1l10 10M11 1L1 11" />
        </svg>
      </div>
      <div className="ml-[12px] w-[322px] h-[726px] bg-[#e9effd] border border-[#cfcfd4] px-[10px] flex flex-col">
        <div className="h-[37px] pt-[2px] flex items-center justify-end text-[12px] text-[#666] shrink-0">
          简体中文
          <Chev className="ml-[4px] opacity-60" />
        </div>
        <div className="mt-[54px] h-[480px] bg-white rounded-[20px] relative flex flex-col items-center px-[20px] font-['Roboto','Noto_Sans_CJK_SC',sans-serif]">
          <div className="mt-[25px] text-[22px] leading-[30px] font-bold text-black">登录</div>
          <div className="mt-[5px] text-[14.600px] leading-[20px] text-black">欢迎进入eCopilot</div>
          <div className="mt-[30px] w-[260px] flex flex-col gap-[21px]">
            <InputBox placeholder="请输入邮箱/手机号" />
            <InputBox placeholder="请输入密码" />
            <div className="flex items-center justify-between">
              <InputBox className="w-[169px]" placeholder="请输入图形验证码" />
              <svg viewBox="0 0 78 33" className="w-[78px] h-[33px] rounded-[6px] bg-[#f5e1c9]" fill="none">
                <rect x="6" y="7" width="5.500" height="17" stroke="#6b3a52" strokeWidth="1.200" />
                <rect x="26" y="7" width="5.500" height="17" stroke="#7a7a80" strokeWidth="1.200" />
                <rect x="45.500" y="7" width="5.500" height="17" stroke="#5a2a6a" strokeWidth="1.200" />
                <rect x="65" y="6" width="5.500" height="18" stroke="#6c7a90" strokeWidth="1.200" />
                <path d="M4 16c15-6 30-3 45-4 8-1 16-3 24-6" stroke="#2f2f7a" strokeWidth="1.400" />
                <path d="M6 12c15 7 30 7 44 6 8 1 15 6 23 7" stroke="#8a3020" strokeWidth="1.400" />
                <path d="M5 11c20 9 38 7 68 11" stroke="#a04030" strokeWidth="1.200" />
              </svg>
            </div>
          </div>
          <div className="mt-[22px] w-[260px] h-[14px] flex items-center">
            <div className="w-[12px] h-[12px] border border-[#dcdcdc] rounded-[2px]" />
            <span className="ml-[10px] text-[12px] text-black">记住密码</span>
          </div>
          <div className="mt-[27px] w-[260px] h-[42px] rounded-[8px] bg-[linear-gradient(90deg,#27c6ff,#1e55ff)] flex items-center justify-center text-white text-[12px] font-bold">
            登录
          </div>
          <div className="mt-[12px] w-[260px] h-[42px] rounded-[8px] border border-[#cfcfcf] flex items-center justify-center text-[13px] font-medium text-[#5f6368]">
            <svg viewBox="0 0 12 12" className="w-[12px] h-[12px] mr-[1px]">
              <rect width="5.700" height="5.700" fill="#f25022" />
              <rect x="6.300" width="5.700" height="5.700" fill="#7fba00" />
              <rect y="6.300" width="5.700" height="5.700" fill="#00a4ef" />
              <rect x="6.300" y="6.300" width="5.700" height="5.700" fill="#ffb900" />
            </svg>
            AAD登录
          </div>
          <div className="mt-[10px] w-[260px] h-[42px] rounded-[8px] border border-[#cfcfcf] flex items-center justify-center text-[13px] font-medium text-[#5f6368]">
            <svg viewBox="0 0 48 48" className="w-[12px] h-[12px] mr-[3px]">
              <path fill="#EA4335" d="M24 9.500c3.500 0 6.700 1.200 9.200 3.600l6.900-6.900C35.900 2.400 30.400 0 24 0 14.600 0 6.500 5.400 2.600 13.200l8 6.200C12.400 13.700 17.700 9.500 24 9.500z" />
              <path fill="#4285F4" d="M47 24.500c0-1.600-.1-3.100-.4-4.500H24v9h13c-.6 3-2.300 5.500-4.800 7.200l7.700 6c4.500-4.200 7.100-10.300 7.100-17.700z" />
              <path fill="#FBBC05" d="M10.500 28.600c-.5-1.400-.8-3-.8-4.600s.3-3.200.8-4.600l-8-6.200C.9 16.500 0 20.100 0 24s.9 7.500 2.600 10.800l7.900-6.200z" />
              <path fill="#34A853" d="M24 48c6.500 0 11.900-2.100 15.900-5.800l-7.700-6c-2.100 1.400-4.900 2.300-8.200 2.300-6.300 0-11.600-4.200-13.500-9.900l-7.900 6.200C6.500 42.600 14.600 48 24 48z" />
            </svg>
            Google登录
          </div>
          {/* annotation box */}
          <div className="absolute left-[-7px] top-[294px] w-[312px] h-[181px] border-[3px] border-[#f44f44] rounded-[2px] pointer-events-none" />
        </div>
      </div>
    </div>
  );
}

function StatusBar() {
  return (
    <div className="h-[22px] shrink-0 bg-[#f3f3f3] border-t border-white flex items-center pb-px text-[12px] text-[#333]">
      <span className="ml-[11px]">就绪</span>
      <svg viewBox="0 0 16 16" className="ml-[20px] w-[15px] h-[15px]" fill="none" stroke="#444">
        <circle cx="5" cy="2.500" r="1.500" />
        <path d="M1 5l4 1 4-1M5 6v3l-2 5M5 9l2 2M9 11l2 3 4-6" />
      </svg>
      <span className="ml-[3px]">辅助功能: 一切就绪</span>
      <div className="ml-auto -mb-px w-[40px] h-[21px] bg-[#dedede] flex items-center justify-center">
        <svg viewBox="0 0 14 14" className="w-[14px] h-[14px]" fill="none" stroke="#333">
          <path d="M.5.500h13v13H.5zM.5 5h13M.5 9.500h13M5 .5v13M9.500.5v13" />
        </svg>
      </div>
      <svg viewBox="0 0 14 14" className="ml-[13px] w-[14px] h-[14px]" fill="none" stroke="#333">
        <path d="M.5.500h13v13H.5z" />
        <path d="M3.500 3h7v8h-7zM5 5.500h4M5 8h4" />
      </svg>
      <svg viewBox="0 0 14 14" className="ml-[26px] w-[14px] h-[14px]" fill="none" stroke="#333">
        <path d="M.5.500h13v13H.5zM.5 8h7V.5" />
      </svg>
      <div className="ml-[19px] w-[8px] h-px bg-[#333]" />
      <div className="ml-[4px] w-[100px] h-px bg-[#777] flex items-center justify-center">
        <div className="w-[5px] h-[11px] bg-[#6e6e6e]" />
      </div>
      <svg viewBox="0 0 8 8" className="ml-[6px] w-[8px] h-[8px]" fill="none" stroke="#333">
        <path d="M4 0v8M0 4h8" />
      </svg>
      <span className="ml-[13px] mr-[8px] text-[13px] text-[#555]">100%</span>
    </div>
  );
}

export default function App() {
  return (
    <div className="w-[1920px] h-[1034px] overflow-hidden flex flex-col bg-[linear-gradient(100deg,#e3e1e9_0%,#e7e3ea_55%,#ede8ea_100%)] font-['Noto_Sans','Noto_Sans_CJK_SC',sans-serif]">
      <TitleBar />
      <TabsRow />
      <Ribbon />
      <FormulaBar />
      <div className="mt-[8px] h-[787px] flex">
        <div className="w-[1571px] shrink-0 flex flex-col">
          <div className="h-[754px] flex shrink-0">
            <Sheet />
            <VScroll />
          </div>
          <SheetTabs />
        </div>
        <LoginPanel />
      </div>
      <StatusBar />
    </div>
  );
}
